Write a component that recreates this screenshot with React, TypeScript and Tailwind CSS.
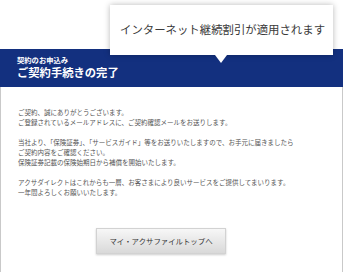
const JP = "font-['Noto_Sans_CJK_JP','Noto_Sans',sans-serif]";

function Tooltip() {
  return (
    <div className="absolute left-[110px] top-[5px] z-10 flex h-[50px] w-[223px] items-center bg-white pl-[10px] shadow-[0_0_6px_rgba(0,0,0,0.28)]">
      <span className="whitespace-nowrap text-[11.4px] leading-none text-[#3a3a3a]">
        インターネット継続割引が適用されます
      </span>
      <div className="absolute left-[105px] top-[50px] h-0 w-0 border-x-[6px] border-t-[8px] border-x-transparent border-t-white" />
    </div>
  );
}

export default function App() {
  return (
    <div className={`relative h-[272px] w-[344px] bg-white pt-[49px] ${JP}`}>
      <Tooltip />
      <div className="w-[343px] border border-t-0 border-[#c9c9c9]">
        <div className="-mx-px bg-[#13307f] pb-[8px] pl-[17px] pt-[6.5px] text-white">
          <p className="text-[7.3px] font-bold leading-[9px]">契約のお申込み</p>
          <h1 className="mt-[0.5px] text-[11.3px] font-bold leading-[14px]">ご契約手続きの完了</h1>
        </div>
        <div className="pb-[19px] pl-[17px] pt-[20px] text-[6.5px] leading-[10px] text-[#555]">
          <p className="whitespace-nowrap">
            ご契約、誠にありがとうございます。
            <br />
            ご登録されているメールアドレスに、ご契約確認メールをお送りします。
          </p>
          <p className="mt-[10px] whitespace-nowrap">
            当社より、「保険証券」、「サービスガイド」等をお送りいたしますので、お手元に届きましたら
            <br />
            ご契約内容をご確認ください。
            <br />
            保険証券記載の保険始期日から補償を開始いたします。
          </p>
          <p className="mt-[9.5px] whitespace-nowrap">
            アクサダイレクトはこれからも一層、お客さまにより良いサービスをご提供してまいります。
            <br />
            一年間よろしくお願いいたします。
          </p>
          <div className="ml-[78px] mt-[31.5px] flex">
            <button
              type="button"
              className="h-[26px] w-[130px] border border-[#d2d2d2] bg-gradient-to-b from-[#f7f7f7] to-[#d9d9d9] text-[7.4px] text-[#333] shadow-[0_1px_2px_rgba(0,0,0,0.2)]"
            >
              マイ・アクサファイルトップへ
            </button>
          </div>
        </div>
      </div>
    </div>
  );
}
